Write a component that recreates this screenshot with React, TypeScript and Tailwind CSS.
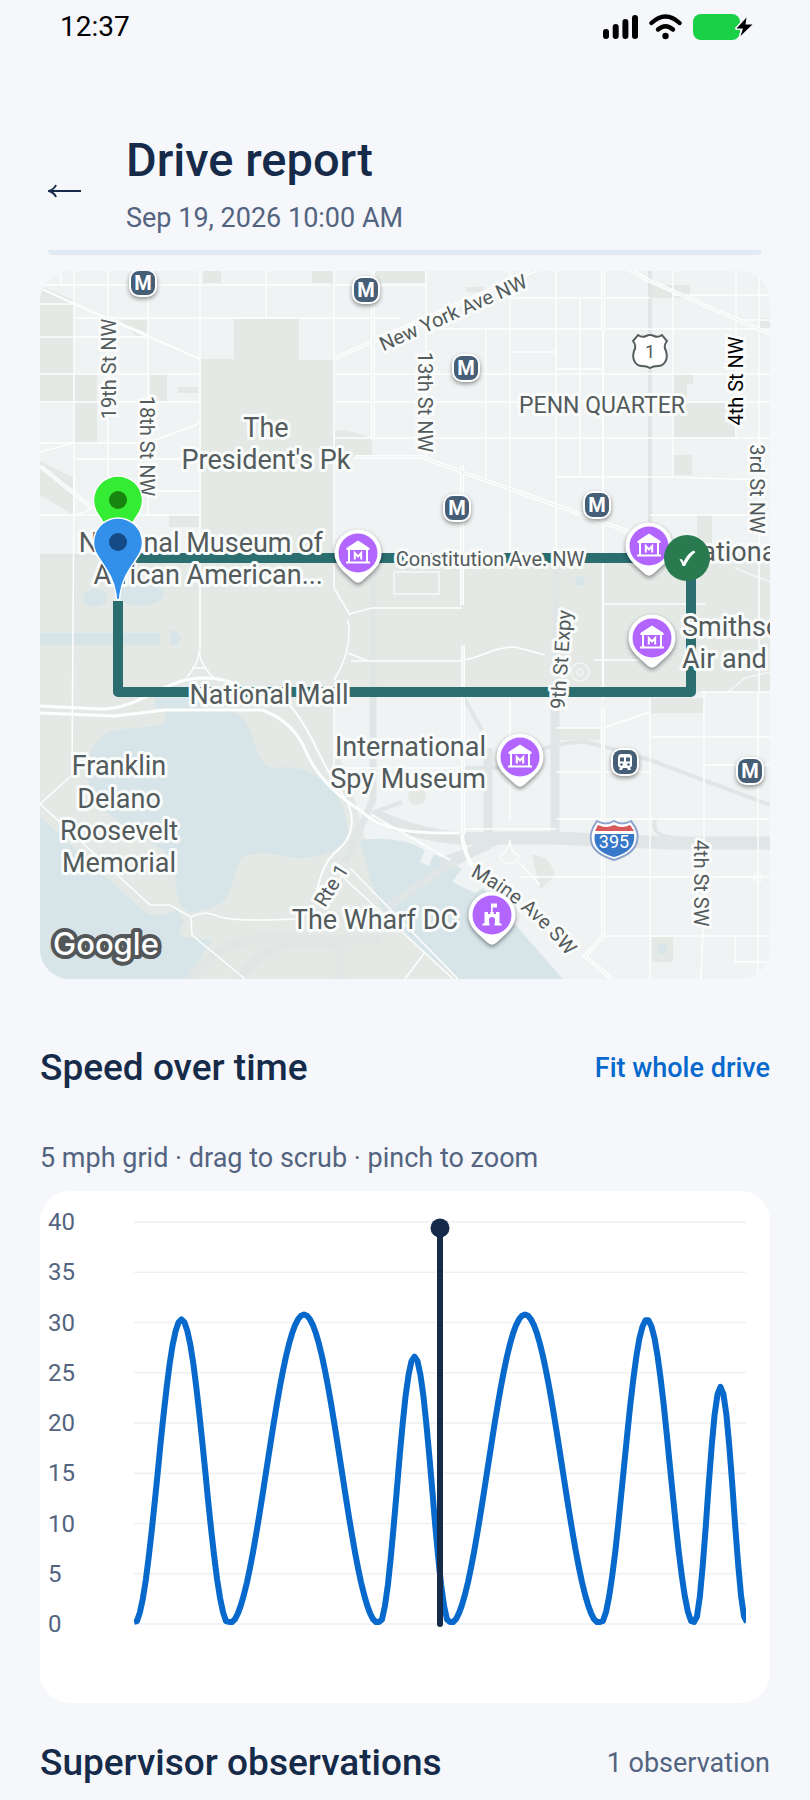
import { useState } from 'react';

const stations = [
  { x: 143, y: 283 },
  { x: 366, y: 290 },
  { x: 466, y: 368 },
  { x: 457, y: 508 },
  { x: 597, y: 505 },
  { x: 750, y: 771 },
];

const museums = [
  { x: 358, y: 553 },
  { x: 649, y: 546 },
  { x: 652, y: 638 },
  { x: 520, y: 757 },
];

type Anchor = 'start' | 'middle' | 'end';

const places: { text: string; x: number; y: number; anchor: Anchor }[] = [
  { text: 'The', x: 266, y: 437, anchor: 'middle' },
  { text: "President's Pk", x: 266, y: 469, anchor: 'middle' },
  { text: 'National Museum of', x: 323, y: 552, anchor: 'end' },
  { text: 'African American...', x: 323, y: 584, anchor: 'end' },
  { text: 'National', x: 682, y: 561, anchor: 'start' },
  { text: 'Smithsonian', x: 682, y: 636, anchor: 'start' },
  { text: 'Air and Space', x: 682, y: 668, anchor: 'start' },
  { text: 'National Mall', x: 269, y: 704, anchor: 'middle' },
  { text: 'International', x: 486, y: 756, anchor: 'end' },
  { text: 'Spy Museum', x: 486, y: 788, anchor: 'end' },
  { text: 'Franklin', x: 119, y: 775, anchor: 'middle' },
  { text: 'Delano', x: 119, y: 808, anchor: 'middle' },
  { text: 'Roosevelt', x: 119, y: 840, anchor: 'middle' },
  { text: 'Memorial', x: 119, y: 872, anchor: 'middle' },
  { text: 'The Wharf DC', x: 458, y: 929, anchor: 'end' },
];

const streets = [
  { text: '19th St NW', x: 116, y: 369, angle: -90 },
  { text: '18th St NW', x: 140, y: 446, angle: 90 },
  { text: '13th St NW', x: 418, y: 402, angle: 90 },
  { text: '3rd St NW', x: 750, y: 489, angle: 90 },
  { text: '4th St SW', x: 694, y: 883, angle: 90 },
  { text: 'New York Ave NW', x: 456, y: 319, angle: -24 },
  { text: '9th St Expy', x: 568, y: 660, angle: -86 },
  { text: 'Rte 1', x: 337, y: 889, angle: -58 },
  { text: 'Constitution Ave. NW', x: 490, y: 566, angle: 0 },
];

const halo = 'fill-[#535b5c] stroke-[#fafbfb] stroke-[6px] [paint-order:stroke] [stroke-linejoin:round]';

function StatusBar() {
  return (
    <div className="flex h-[54px] items-center justify-between pr-14 pl-15">
      <span className="text-[28px] leading-9 text-black">12:37</span>
      <div className="flex items-center gap-[11px]">
        <svg width="35" height="26" viewBox="0 0 35 26" aria-label="Signal">
          <rect x="0" y="15" width="6" height="10" rx="3" />
          <rect x="9.7" y="10" width="6" height="15" rx="3" />
          <rect x="19.4" y="5" width="6" height="20" rx="3" />
          <rect x="29" y="1" width="6" height="24" rx="3" />
        </svg>
        <svg width="33" height="26" viewBox="0 0 33 26" fill="none" stroke="#000" strokeLinecap="round" aria-label="Wi-Fi">
          <path d="M2.5 9Q16.5-4 30.5 9" strokeWidth="4.4" />
          <path d="M9 15.5Q16.5 9 24 15.5" strokeWidth="4.4" />
          <circle cx="16.5" cy="22" r="3.2" fill="#000" stroke="none" />
        </svg>
        <svg width="61" height="28" viewBox="0 0 61 28" aria-label="Battery charging">
          <rect x="0" y="1" width="47" height="26" rx="8" fill="#19d047" />
          <path
            d="M53.5 4.5L43.5 15.5H50L47.5 23L59.5 11.5H52.5Z"
            className="fill-black stroke-[#f5f7fb] stroke-[3px] [paint-order:stroke]"
            strokeLinejoin="round"
          />
        </svg>
      </div>
    </div>
  );
}

function Pin({ x, y, fill, dot }: { x: number; y: number; fill: string; dot: string }) {
  return (
    <g transform={`translate(${x} ${y})`}>
      <path
        d="M0 58C-1.5 58-2 56-2 53C-4 35-15 23-21 13A24.5 24.5 0 1 1 21 13C15 23 4 35 2 53C2 56 1.5 58 0 58Z"
        fill={fill}
        stroke="#fff"
        strokeWidth="1.5"
      />
      <circle r="9" fill={dot} />
    </g>
  );
}

function PlaceMarker({ x, y, kind }: { x: number; y: number; kind: 'museum' | 'wharf' }) {
  return (
    <g transform={`translate(${x} ${y})`}>
      <path
        d="M-23.5 0A23.5 23.5 0 1 1 23.5 0C23.5 8 19 14 14 19L4 28Q0 31.5-4 28L-14 19C-19 14-23.5 8-23.5 0Z"
        className="fill-white drop-shadow-[0_2px_2px_rgba(0,0,0,0.45)]"
      />
      <circle r="19.5" fill="#b266ff" />
      {kind === 'museum' ? (
        <g fill="none" stroke="#fff">
          <path d="M0-12.5L11.5-5V-3H-11.5V-5Z" fill="#fff" stroke="none" />
          <path d="M-9-3V9M9-3V9" strokeWidth="2" />
          <path d="M-12 9.5H12" strokeWidth="2" />
          <path d="M-3.2 6.5V0L0 3.5L3.2 0V6.5" strokeWidth="2" />
        </g>
      ) : (
        <g fill="#fff">
          <path d="M-7.5-3H-4V-1H-1.7V-3H1.7V-1H4V-3H7.5V9H3V5A3 3 0 0 0-3 5V9H-7.5Z" />
          <path d="M-9.5 8.5H-2.5V10.5H-9.5ZM2.5 8.5H9.5V10.5H2.5ZM-1-11.5H5V-7.5H.6V-2H-1Z" />
        </g>
      )}
    </g>
  );
}

function StationBadge({ x, y }: { x: number; y: number }) {
  return (
    <g transform={`translate(${x} ${y})`}>
      <rect x="-14" y="-14" width="28" height="28" rx="10" className="fill-white drop-shadow-[0_2px_2px_rgba(0,0,0,0.4)]" />
      <rect x="-12" y="-12" width="24" height="24" rx="8" fill="#465e76" />
      <text y="7" textAnchor="middle" className="fill-white text-[20px] font-bold">
        M
      </text>
    </g>
  );
}

function DriveMap() {
  return (
    <svg viewBox="40 271 730 708" className="mt-4 block w-full rounded-[30px] bg-[#f0f3f3]" role="img" aria-label="Route map">
      {/* Parks and blocks */}
      <g fill="#e4e9e6">
        <path d="M234 319H299V360H334V556H200V359H234Z" />
        <path d="M40 556H770V692H334V740L355 800L365 838L400 905L462 979H40Z" />
        <path d="M40 286L74 300V402H40ZM74 374H97V443H74ZM40 461L74 478V515L40 495ZM120 320H148V335L136 336Z" />
        <path d="M150 373H167V402H150ZM178 387H198V393H178ZM203 271H221V283H203ZM169 515H199V527H169Z" />
        <path d="M312 271H334V283H312ZM375 271H425V283H375ZM335 430Q355 430 372 439V457H335ZM466 287H484V292H466Z" />
        <path d="M652 285H690V298H652ZM760 318H770V330H760ZM673 374H693V384H687V403H736V437H673ZM673 455H692V475H673ZM697 515H712V556H697Z" />
        <path d="M650 698H704V713H650ZM558 728H600V740H558ZM532 855Q550 855 555 875L540 890ZM652 937H673V962H652Z" />
        <circle cx="417" cy="796" r="9" />
      </g>

      {/* Water */}
      <g fill="#d7e5e9">
        <path d="M167 709L230 711C245 715 250 728 256 748C260 760 266 768 275 768C290 766 305 768 315 775C335 785 346 805 348 833C345 848 325 858 300 858C280 857 265 849 243 857C236 865 235 875 230 890C225 905 215 908 190 913L179 903C175 880 175 865 163 850C140 835 100 815 90 790C85 770 86 750 103 735C115 725 155 730 165 722Z" />
        <path d="M40 817L145 912Q156 919 177 910L184 922Q178 930 181 937L213 940L186 979H40Z" />
        <path d="M360 840Q400 835 425 850L420 862L429 866L434 854L462 869L452 882L475 893L483 888L563 979H458L403 933C385 920 372 890 367 867Z" />
        <path d="M40 633H160V645H40ZM170 631H177L181 638L177 645H170Z" />
        <ellipse cx="95" cy="598" rx="12" ry="9" />
        <ellipse cx="140" cy="593" rx="24" ry="13" />
        <path d="M155 698H200V708H155Z" />
        <circle cx="580" cy="581" r="5" />
        <circle cx="662" cy="949" r="5" />
      </g>

      {/* Highways and rail */}
      <g fill="none" stroke="#e0e5e5">
        <path d="M650 271V540" strokeWidth="4" />
        <path d="M373 557V800L345 862M556 560V700" strokeWidth="7" />
        <path d="M555 700V835M488 748V835" strokeWidth="9" />
        <path d="M375 815Q430 843 500 838H555L670 843H770" strokeWidth="13" />
        <path d="M385 910Q450 860 490 845M440 862L500 840" strokeWidth="8" />
        <path d="M462 768H500Q545 742 585 742Q620 750 650 760L770 805" strokeWidth="4" />
        <path d="M464 698L482 730M372 813L402 802" strokeWidth="4" />
        <path d="M655 820Q650 838 680 838" strokeWidth="4" />
        <path d="M280 940H380M190 979Q220 930 300 940M240 979Q270 930 340 945V979" strokeWidth="9" opacity=".6" />
        <path d="M40 556H770" strokeWidth="4" />
      </g>

      {/* Streets */}
      <g fill="none" stroke="#fdfefe" strokeWidth="1.5">
        <path d="M74 271V515M108 271V515M148 271V515M200 271V652M266 271V318M334 271V588M426 271V462M510 271V557M486 329V480M556 271V560M580 298V477M673 271V477M736 271V438M759 271V692M61 271V285" />
        <path d="M40 285H330M40 304H74M74 318H334M40 337H148M40 374H200M40 402H200M40 443H148M74 459H200M148 491H200M40 515H200" />
        <path d="M334 285H426M334 318H400M334 374H770M334 402H770M334 438H770M426 329H770M510 298H650M510 352H556M556 369H603M556 477H660L770 480M650 515H770M673 295H770M736 320H770" />
        <path d="M603 604H705M351 661H460M334 768H460M556 728H603M603 728L650 712M650 737H770M704 765H770M556 772H650M556 819H770M556 877H770M603 936H770M735 936V962H770M650 698V979M704 692V905L701 979M758 692V979M510 698V820" />
        <path d="M700 692H770M520 877H603M334 698V768M462 829H556M594 660H650" />
        <path d="M74 475L72 775L40 804L150 905H170L191 917L192 935L245 979M191 917Q205 910 218 916T295 919" />
        <path d="M348 620Q353 650 334 680M334 588L350 615M348 653L368 661M460 660C480 660 490 647 515 647L545 655M349 614L372 608H462" />
        <path d="M199 652Q198 665 187 677M199 652Q202 668 215 679M192 668H207" />
        <path d="M345 870L325 905M350 868L458 979M343 877L453 979M425 952L405 979" />
        <path d="M40 452L74 443M145 443L160 438L196 425L200 420M74 515Q90 512 95 505" />
        <path d="M500 856A9 7 0 1 0 519 856Q510 852 510 840Q508 852 500 856M519 862L540 885" />
        <circle cx="758" cy="878" r="4" />
        <circle cx="580" cy="672" r="9" opacity=".6" />
        <circle cx="580" cy="672" r="3" opacity=".6" />
        <path d="M394 572H439V594H394ZM735 568L770 582M728 692L745 678L770 672" opacity=".7" />
      </g>

      {/* Avenues */}
      <g fill="none" stroke="#fdfefe" strokeWidth="4">
        <path d="M373 271V440M462 465V605M463 645V835M603 271V330M603 707V936L585 956L612 979M462 835Q465 860 480 875" />
        <path d="M42 289L90 311M200 359L90 311L148 335" strokeWidth="2" />
        <path d="M334 359L373 341L540 268M626 268L650 281L770 334M355 457H422L470 475L530 496L635 534" />
        <path d="M40 466L92 508" />
        <path d="M40 706L100 709C135 709 155 688 185 680Q215 674 240 686" strokeWidth="3" />
        <path d="M40 713L115 716L165 710H262Q290 720 303 745C315 775 335 795 360 810C380 830 410 834 460 833" strokeWidth="3" />
        <path d="M290 705C315 735 320 765 345 798C355 815 355 835 338 850Q322 862 316 895M372 815L450 860" strokeWidth="2" />
      </g>
      <g fill="none" stroke="#eceff0" strokeWidth="1">
        <path d="M373 271V440M462 465V605M463 645V835M603 271V330M603 707V936L585 956L612 979M334 359L373 341L540 268M626 268L650 281L770 334M355 457H422L470 475L530 496L635 534M40 466L92 508" />
      </g>
      <path d="M603 330V700" stroke="#fdfefe" strokeWidth="2" />

      <path d="M118 558H691V692H118V601" fill="none" stroke="#2a6e70" strokeWidth="10" strokeLinejoin="round" />

      {/* Route shields */}
      <path
        d="M638 335Q642 338 646 336Q650 334 654 336Q658 338 662 335L667 341Q663 346 666 351C669 361 663 366 658 366Q653 366 650 368Q647 366 642 366C637 366 631 361 634 351Q637 346 633 341Z"
        fill="#fff"
        stroke="#555d5e"
        strokeWidth="2"
      />
      <text x="650" y="358" textAnchor="middle" className="fill-[#535b5c] text-[18px]">
        1
      </text>
      <path
        d="M597 821Q606 826 614 821Q622 826 631 821Q640 832 637 841C635 852 624 857 614 860C604 857 593 852 591 841Q589 832 597 821Z"
        fill="#fff"
        stroke="#8ea3cd"
        strokeWidth="2"
      />
      <path d="M598 825Q606 829 614 825Q622 829 630 825L634 831H595Z" fill="#d9585c" />
      <path d="M595 834H634C636 848 625 854 614 857C603 854 592 848 595 834Z" fill="#3778c9" />
      <text x="614" y="848" textAnchor="middle" className="fill-white text-[18px]">
        395
      </text>

      {/* Labels */}
      <g className={`text-[20px] ${halo}`}>
        {streets.map((street) => (
          <text key={street.text} textAnchor="middle" transform={`translate(${street.x} ${street.y}) rotate(${street.angle})`}>
            {street.text}
          </text>
        ))}
        <path id="maine-ave" d="M470 876Q525 903 570 960" fill="none" stroke="none" />
        <text>
          <textPath href="#maine-ave">Maine Ave SW</textPath>
        </text>
      </g>
      <text
        textAnchor="middle"
        transform="translate(743 381) rotate(-90)"
        className="fill-black stroke-[#fafbfb] stroke-[6px] text-[20px] [paint-order:stroke]"
      >
        4th St NW
      </text>
      <g className={`text-[27px] ${halo}`}>
        {places.map((place) => (
          <text key={place.text} x={place.x} y={place.y} textAnchor={place.anchor}>
            {place.text}
          </text>
        ))}
      </g>
      <text x="602" y="413" textAnchor="middle" className={`text-[23px] ${halo}`}>
        PENN QUARTER
      </text>

      {/* Markers */}
      {stations.map((station) => (
        <StationBadge key={`${station.x}-${station.y}`} {...station} />
      ))}
      <g transform="translate(625 762)">
        <rect x="-14" y="-14" width="28" height="28" rx="10" className="fill-white drop-shadow-[0_2px_2px_rgba(0,0,0,0.4)]" />
        <rect x="-12" y="-12" width="24" height="24" rx="8" fill="#465e76" />
        <path d="M-3.5-8H3.5Q7-8 7-4.5V3Q7 5 5 5.5L6 8H3L2 6H-2L-3 8H-6L-5 5.5Q-7 5-7 3V-4.5Q-7-8-3.5-8Z" fill="#fff" />
        <path d="M-5-4.5H-1V-.5H-5ZM1-4.5H5V-.5H1Z" fill="#465e76" />
        <circle cx="-3.5" cy="2.5" r="1.3" fill="#465e76" />
        <circle cx="3.5" cy="2.5" r="1.3" fill="#465e76" />
      </g>
      {museums.map((museum) => (
        <PlaceMarker key={`${museum.x}-${museum.y}`} kind="museum" {...museum} />
      ))}
      <PlaceMarker x={492} y={915} kind="wharf" />

      <circle cx="687" cy="558" r="23" fill="#2a7a4f" />
      <path d="M679.5 559.5Q682 557.5 683.5 562Q688 553 693.500 550.5L695.500 552Q689 557.5 685 566H682.500Q681.500 561.5 679.500 559.500Z" fill="#fff" />
      <Pin x={118} y={500} fill="#33ec33" dot="#17850f" />
      <Pin x={118} y={542} fill="#3390ea" dot="#144a85" />

      <text
        x="53"
        y="955"
        className="fill-white stroke-[#535759] stroke-[8px] font-['Inter',sans-serif] text-[31px] font-medium [paint-order:stroke] [stroke-linejoin:round]"
      >
        Google
      </text>
    </svg>
  );
}

const gridValues = [40, 35, 30, 25, 20, 15, 10, 5, 0];

// Each leg runs from one stop to the next: pixel range on the time axis and top speed
const legs = [
  { from: 94, to: 189, peak: 30.3 },
  { from: 189, to: 339, peak: 30.8 },
  { from: 339, to: 410, peak: 26.6 },
  { from: 410, to: 560, peak: 30.8 },
  { from: 560, to: 654, peak: 30.3 },
  { from: 654, to: 707, peak: 23.6 },
];

const speedToY = (mph: number) => 433 - mph * 10.05;

const speedPoints = legs
  .flatMap(({ from, to, peak }) => {
    const steps = Math.round((to - from) / 3);
    return Array.from({ length: steps + 1 }, (_, i) => {
      const t = i / steps;
      const mph = peak * Math.sin(Math.PI * t) ** 2;
      return `${(from + (to - from) * t).toFixed(1)},${speedToY(Math.max(mph, 0.2)).toFixed(1)}`;
    });
  })
  .join(' ');

function SpeedChart() {
  return (
    <svg viewBox="0 0 730 512" className="mt-[15px] block w-full rounded-[30px] bg-white" role="img" aria-label="Speed over time">
      <clipPath id="plot">
        <rect x="94" y="20" width="612" height="414" />
      </clipPath>
      {gridValues.map((value) => (
        <g key={value}>
          <path d={`M94 ${speedToY(value)}H706`} stroke="#edf1f4" strokeWidth="1.5" />
          <text x="8" y={speedToY(value) + 8} className="fill-[#536480] text-[24px]">
            {value}
          </text>
        </g>
      ))}
      <polyline points={speedPoints} fill="none" stroke="#0769cc" strokeWidth="6" strokeLinejoin="round" clipPath="url(#plot)" />
      <path d="M400 37V433" stroke="#152b49" strokeWidth="6" strokeLinecap="round" />
      <circle cx="400" cy="37" r="9.5" fill="#152b49" />
    </svg>
  );
}

export default function App() {
  const [wholeDrive, setWholeDrive] = useState(false);

  return (
    <div className="min-h-screen bg-[#f5f7fb] font-['Roboto',sans-serif] text-[#152b49]">
      <StatusBar />

      <main className="px-10 pt-[78px]">
        <header>
          <div className="flex items-end pb-3.5">
            <button type="button" aria-label="Back" className="mr-2 flex h-[90px] w-[78px] items-center pl-2">
              <svg width="33" height="14" viewBox="0 0 33 14" fill="none" stroke="currentColor" strokeWidth="2">
                <path d="M33 7H2" />
                <path d="M8 1Q6.5 5 1 7Q6.5 9 8 13" />
              </svg>
            </button>
            <div>
              <h1 className="text-[47px] leading-14 font-medium">Drive report</h1>
              <p className="mt-3 text-[27px] leading-9 text-[#536480]">Sep 19, 2026 10:00 AM</p>
            </div>
          </div>
          <div className="mx-2 h-[5px] rounded-b-lg bg-[#e0eaf3]" />
        </header>

        <DriveMap />

        <section>
          <div className="mt-[65px] flex items-center justify-between">
            <h2 className="text-[37px] leading-12 font-medium">Speed over time</h2>
            <button
              type="button"
              aria-pressed={wholeDrive}
              onClick={() => setWholeDrive(!wholeDrive)}
              className="text-[27px] leading-9 font-medium text-[#0769cc]"
            >
              Fit whole drive
            </button>
          </div>
          <p className="mt-12 text-[27px] leading-9 text-[#536480]">5 mph grid · drag to scrub · pinch to zoom</p>
          <SpeedChart />
        </section>

        <section className="mt-9 flex items-center justify-between">
          <h2 className="text-[37px] leading-12 font-medium">Supervisor observations</h2>
          <p className="text-[27px] leading-9 text-[#536480]">1 observation</p>
        </section>
      </main>
    </div>
  );
}
